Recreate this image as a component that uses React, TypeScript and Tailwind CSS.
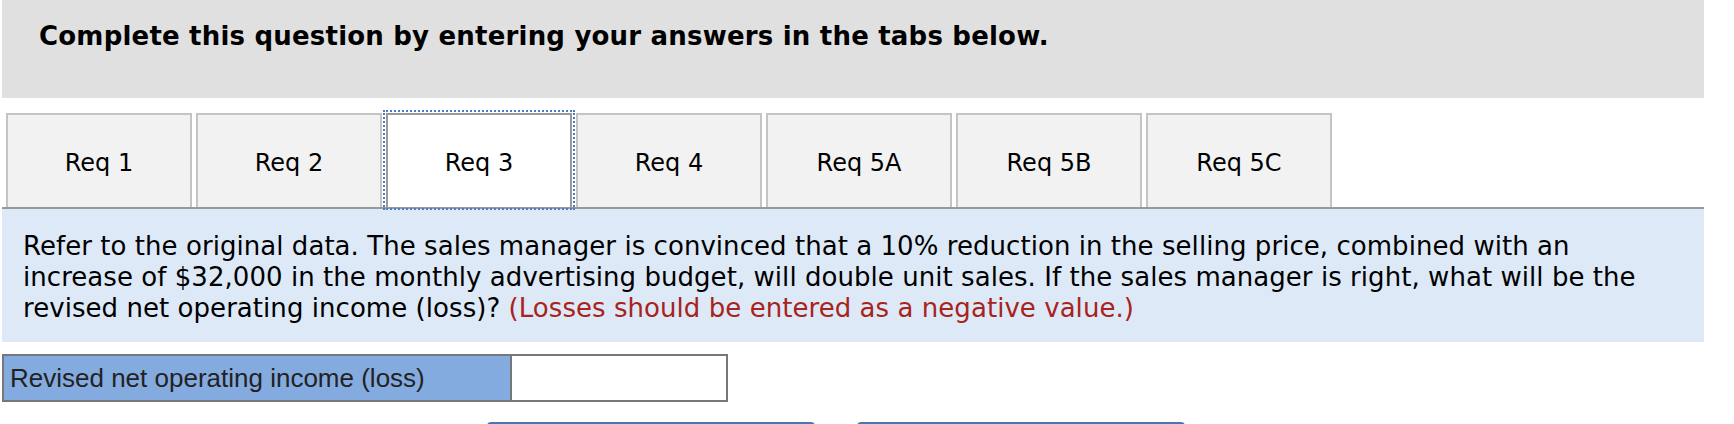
import React from "react";

const tabs = ["Req 1", "Req 2", "Req 3", "Req 4", "Req 5A", "Req 5B", "Req 5C"];

export default function App() {
  return (
    <div className="w-[1734px] h-[424px] overflow-hidden bg-white">
      <div className="ml-[2px] w-[1702px]">
        <div className="h-[98px] bg-[#e0e0e0] pl-[37px] pt-[21px]">
          <div
            className="text-[26px] font-bold text-black leading-[30px] whitespace-nowrap tracking-[0.2px]"
            style={{ fontFamily: '"DejaVu Sans", Verdana, sans-serif' }}
          >
            Complete this question by entering your answers in the tabs below.
          </div>
        </div>

        <div className="mt-[15px] flex gap-[4px] pl-[4px]">
          {tabs.map((t, i) =>
            i === 2 ? (
              <div
                key={t}
                className="w-[186px] h-[94px] border-2 border-b-0 border-[#999999] bg-white flex items-center justify-center pt-[4px] text-[24px] text-black outline-2 outline-dotted outline-[#4a7cc8] outline-offset-1"
                style={{ fontFamily: '"DejaVu Sans", Verdana, sans-serif' }}
              >
                {t}
              </div>
            ) : (
              <div
                key={t}
                className="w-[186px] h-[94px] border-2 border-b-0 border-[#c4c4c4] bg-[#f2f2f2] flex items-center justify-center pt-[4px] text-[24px] text-black"
                style={{ fontFamily: '"DejaVu Sans", Verdana, sans-serif' }}
              >
                {t}
              </div>
            )
          )}
        </div>
        <div className="h-[2px] bg-[#999999]" />

        <div
          className="h-[133px] bg-[#dde9f7] pl-[21px] pt-[22px] text-[26px] leading-[31px] text-black whitespace-nowrap tracking-[0.05px]"
          style={{ fontFamily: '"DejaVu Sans", Verdana, sans-serif' }}
        >
          Refer to the original data. The sales manager is convinced that a 10% reduction in the selling price, combined with an
          <br />
          increase of $32,000 in the monthly advertising budget, will double unit sales. If the sales manager is right, what will be the
          <br />
          revised net operating income (loss)?{" "}
          <span className="text-[#a8231c]">(Losses should be entered as a negative value.)</span>
        </div>

        <div className="mt-[12px] flex w-[726px] h-[48px] border-2 border-[#777777]">
          <div
            className="w-[508px] bg-[#84abdf] border-r-2 border-[#777777] pl-[6px] flex items-center text-[26px] text-[#222222] whitespace-nowrap"
            style={{ fontFamily: '"Liberation Sans", Arial, sans-serif' }}
          >
            Revised net operating income (loss)
          </div>
          <div className="flex-1 bg-white" />
        </div>

        <div className="mt-[20px] ml-[485px] flex gap-[42px]">
          <div className="w-[328px] h-[40px] rounded-t-[4px] bg-[#4a77b4]" />
          <div className="w-[328px] h-[40px] rounded-t-[4px] bg-[#4a77b4]" />
        </div>
      </div>
    </div>
  );
}
